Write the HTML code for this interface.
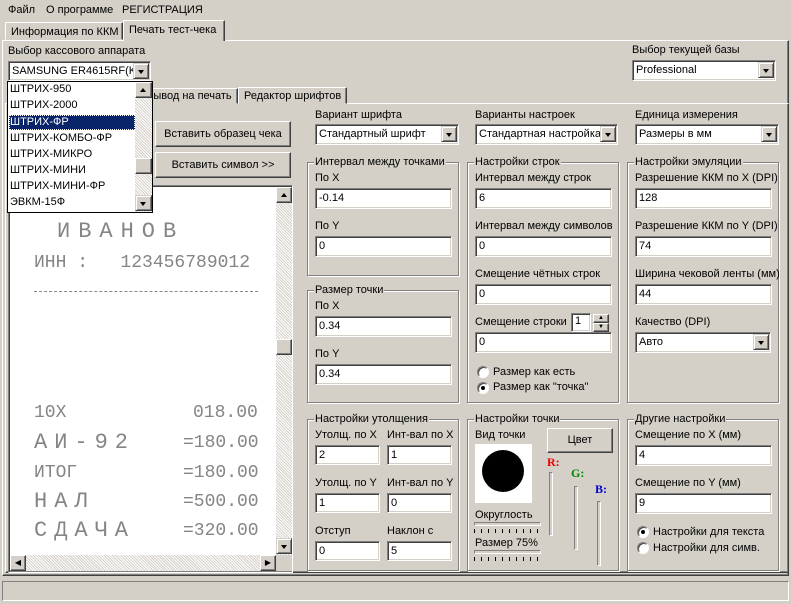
<!DOCTYPE html>
<html><head><meta charset="utf-8"><style>
*{box-sizing:border-box;margin:0;padding:0}
body{width:791px;height:604px;background:#d4d0c8;font:11px "Liberation Sans","DejaVu Sans",sans-serif;color:#000;position:relative;overflow:hidden}
div,span{position:absolute}
.l{white-space:nowrap;line-height:13px}
.f{background:#fff;border:1px solid;border-color:#808080 #fff #fff #808080;box-shadow:inset 1px 1px #404040,inset -1px -1px #d4d0c8;padding:3px 0 0 3px;white-space:nowrap;line-height:13px;overflow:hidden}
.b{border:1px solid;border-color:#fff #404040 #404040 #fff;box-shadow:inset -1px -1px #808080;background:#d4d0c8;text-align:center;white-space:nowrap}
.g{border:1px solid #808080;box-shadow:inset 1px 1px #fff,1px 1px #fff}
.gl{background:#d4d0c8;padding:0 1px;top:-7px;left:6px;white-space:nowrap;line-height:13px}
.dd{width:16px;height:16px;top:1px;right:1px;border:1px solid;border-color:#d4d0c8 #404040 #404040 #d4d0c8;box-shadow:inset 1px 1px #fff,inset -1px -1px #808080;background:#d4d0c8}
.dd:after,.up:after{content:"";position:absolute;left:4px;top:6px;border:3.5px solid transparent;border-top:4px solid #000;border-bottom:0}
.up:after{border-top:0;border-bottom:4px solid #000;top:5px}
.sb{background:#e8e6e2 repeating-linear-gradient(45deg,#fff 0 1px,#d4d0c8 1px 2px)}
.rc{font-family:"Liberation Mono","DejaVu Sans Mono",monospace;color:#858585;white-space:pre;font-size:18px;line-height:20px}
.r{width:12px;height:12px;border-radius:50%;background:#fff;border:1px solid;border-color:#808080 #fff #fff #808080;box-shadow:inset 1px 1px #404040}
.tab{border:1px solid;border-color:#fff #404040 transparent #fff;box-shadow:inset -1px 0 #808080;padding:2px 5px;white-space:nowrap;line-height:13px;background:#d4d0c8}
</style></head><body>
<span class="l" style="left:8px;top:4px">Файл</span>
<span class="l" style="left:46px;top:4px">О программе</span>
<span class="l" style="left:122px;top:4px">РЕГИСТРАЦИЯ</span>
<div style="left:2px;top:40px;width:787px;height:536px;border:1px solid;border-color:#fff #404040 #404040 #fff;box-shadow:inset -1px -1px #808080"></div>
<div class="tab" style="left:5px;top:22px;width:118px;height:18px;padding-top:3px">Информация по ККМ</div>
<div class="tab" style="left:123px;top:20px;width:102px;height:21px;padding-top:3px;border-bottom:0">Печать тест-чека</div>
<span class="l" style="left:8px;top:45px">Выбор кассового аппарата</span>
<div class="f" style="left:8px;top:61px;width:143px;height:20px">SAMSUNG ER4615RF(K<div class="dd"></div></div>
<span class="l" style="left:632px;top:44px">Выбор текущей базы</span>
<div class="f" style="left:632px;top:60px;width:144px;height:21px">Professional<div class="dd"></div></div>
<div style="left:5px;top:103px;width:784px;height:470px;border:1px solid;border-color:#fff #404040 #404040 #fff;box-shadow:inset -1px -1px #808080"></div>
<div class="tab" style="left:140px;top:88px;width:98px;height:16px;padding-top:1px">Вывод на печать</div>
<div class="tab" style="left:238px;top:87px;width:109px;height:17px;padding-top:2px">Редактор шрифтов</div>
<div class="b" style="left:155px;top:121px;width:136px;height:26px;line-height:24px">Вставить образец чека</div>
<div class="b" style="left:155px;top:152px;width:136px;height:26px;line-height:24px">Вставить символ &gt;&gt;</div>
<div style="left:8px;top:185px;width:285px;height:388px;border:1px solid;border-color:#808080 #fff #fff #808080;box-shadow:inset 1px 1px #404040"></div>
<div style="left:10px;top:187px;width:266px;height:368px;background:#fff"></div>
<div class="sb" style="left:276px;top:187px;width:16px;height:368px"></div>
<div class="b up" style="left:276px;top:187px;width:16px;height:16px;position:absolute"></div>
<div class="b" style="left:276px;top:339px;width:16px;height:16px"></div>
<div class="b dd" style="left:276px;top:538px;width:16px;height:16px;position:absolute"></div>
<div class="sb" style="left:10px;top:555px;width:266px;height:16px"></div>
<div class="b" style="left:10px;top:555px;width:16px;height:16px;font-size:8px;line-height:14px">◀</div>
<div class="b" style="left:260px;top:555px;width:16px;height:16px;font-size:8px;line-height:14px">▶</div>
<div class="rc" style="left:57px;top:222px;font-size:22px;letter-spacing:8px">ИВАНОВ</div>
<div class="rc" style="left:34px;top:253px">ИНН :   123456789012</div>
<div style="left:34px;top:291px;width:224px;border-top:1px dashed #888"></div>
<div class="rc" style="left:34px;top:403px">10X</div><div class="rc" style="left:193px;top:403px">018.00</div>
<div class="rc" style="left:34px;top:433px;font-size:22px;letter-spacing:7px">АИ-92</div><div class="rc" style="left:183px;top:433px">=180.00</div>
<div class="rc" style="left:34px;top:463px">ИТОГ</div><div class="rc" style="left:183px;top:463px">=180.00</div>
<div class="rc" style="left:34px;top:492px;font-size:22px;letter-spacing:7px">НАЛ</div><div class="rc" style="left:183px;top:492px">=500.00</div>
<div class="rc" style="left:34px;top:521px;font-size:22px;letter-spacing:7px">СДАЧА</div><div class="rc" style="left:183px;top:521px">=320.00</div>
<div style="left:7px;top:81px;width:146px;height:132px;background:#fff;border:1px solid #000"></div>
<span class="l" style="left:10px;top:83px">ШТРИХ-950</span>
<span class="l" style="left:10px;top:99px">ШТРИХ-2000</span>
<div style="left:9px;top:115px;width:126px;height:15px;background:#0a246a;border:1px dotted #fff"></div>
<span class="l" style="left:10px;top:116px;color:#fff">ШТРИХ-ФР</span>
<span class="l" style="left:10px;top:132px">ШТРИХ-КОМБО-ФР</span>
<span class="l" style="left:10px;top:148px">ШТРИХ-МИКРО</span>
<span class="l" style="left:10px;top:164px">ШТРИХ-МИНИ</span>
<span class="l" style="left:10px;top:180px">ШТРИХ-МИНИ-ФР</span>
<span class="l" style="left:10px;top:196px">ЭВКМ-15Ф</span>
<div class="sb" style="left:135px;top:82px;width:17px;height:130px"></div>
<div class="b up" style="left:135px;top:82px;width:17px;height:16px;position:absolute"></div>
<div class="b" style="left:135px;top:158px;width:17px;height:16px"></div>
<div class="b dd" style="left:135px;top:195px;width:17px;height:16px;position:absolute"></div>
<span class="l" style="left:315px;top:109px">Вариант шрифта</span>
<div class="f" style="left:315px;top:124px;width:144px;height:21px">Стандартный шрифт<div class="dd"></div></div>
<span class="l" style="left:475px;top:109px">Варианты настроек</span>
<div class="f" style="left:475px;top:124px;width:143px;height:21px">Стандартная настройка<div class="dd"></div></div>
<span class="l" style="left:635px;top:109px">Единица измерения</span>
<div class="f" style="left:635px;top:124px;width:144px;height:21px">Размеры в мм<div class="dd"></div></div>
<div class="g" style="left:307px;top:162px;width:152px;height:114px"><span class="gl">Интервал между точками</span></div>
<span class="l" style="left:315px;top:172px">По X</span>
<div class="f" style="left:315px;top:188px;width:137px;height:21px">-0.14</div>
<span class="l" style="left:315px;top:220px">По Y</span>
<div class="f" style="left:315px;top:236px;width:137px;height:21px">0</div>
<div class="g" style="left:307px;top:290px;width:152px;height:113px"><span class="gl">Размер точки</span></div>
<span class="l" style="left:315px;top:300px">По X</span>
<div class="f" style="left:315px;top:316px;width:137px;height:21px">0.34</div>
<span class="l" style="left:315px;top:348px">По Y</span>
<div class="f" style="left:315px;top:364px;width:137px;height:21px">0.34</div>
<div class="g" style="left:467px;top:162px;width:152px;height:241px"><span class="gl">Настройки строк</span></div>
<span class="l" style="left:475px;top:172px">Интервал между строк</span>
<div class="f" style="left:475px;top:188px;width:137px;height:21px">6</div>
<span class="l" style="left:475px;top:220px">Интервал между символов</span>
<div class="f" style="left:475px;top:236px;width:137px;height:21px">0</div>
<span class="l" style="left:475px;top:268px">Смещение чётных строк</span>
<div class="f" style="left:475px;top:284px;width:137px;height:21px">0</div>
<span class="l" style="left:475px;top:316px">Смещение строки</span>
<div class="f" style="left:571px;top:313px;width:20px;height:19px;padding-top:1px">1</div>
<div class="b" style="left:593px;top:314px;width:16px;height:9px;font-size:6px;line-height:7px">▲</div>
<div class="b" style="left:593px;top:323px;width:16px;height:9px;font-size:6px;line-height:7px">▼</div>
<div class="f" style="left:475px;top:332px;width:137px;height:21px">0</div>
<div class="r" style="left:477px;top:366px"></div><span class="l" style="left:493px;top:366px">Размер как есть</span>
<div class="r" style="left:477px;top:382px"><div style="left:3px;top:3px;width:4px;height:4px;background:#000;border-radius:50%"></div></div><span class="l" style="left:493px;top:381px">Размер как "точка"</span>
<div class="g" style="left:627px;top:162px;width:152px;height:241px"><span class="gl">Настройки эмуляции</span></div>
<span class="l" style="left:635px;top:172px">Разрешение ККМ по X (DPI)</span>
<div class="f" style="left:635px;top:188px;width:137px;height:21px">128</div>
<span class="l" style="left:635px;top:220px">Разрешение ККМ по Y (DPI)</span>
<div class="f" style="left:635px;top:236px;width:137px;height:21px">74</div>
<span class="l" style="left:635px;top:268px">Ширина чековой ленты (мм)</span>
<div class="f" style="left:635px;top:284px;width:137px;height:21px">44</div>
<span class="l" style="left:635px;top:316px">Качество (DPI)</span>
<div class="f" style="left:635px;top:332px;width:136px;height:21px">Авто<div class="dd"></div></div>
<div class="g" style="left:307px;top:419px;width:152px;height:152px"><span class="gl">Настройки утолщения</span></div>
<span class="l" style="left:315px;top:429px">Утолщ. по X</span><span class="l" style="left:387px;top:429px">Инт-вал по X</span>
<div class="f" style="left:315px;top:445px;width:65px;height:20px">2</div><div class="f" style="left:387px;top:445px;width:65px;height:20px">1</div>
<span class="l" style="left:315px;top:477px">Утолщ. по Y</span><span class="l" style="left:387px;top:477px">Инт-вал по Y</span>
<div class="f" style="left:315px;top:493px;width:65px;height:20px">1</div><div class="f" style="left:387px;top:493px;width:65px;height:20px">0</div>
<span class="l" style="left:315px;top:525px">Отступ</span><span class="l" style="left:387px;top:525px">Наклон с</span>
<div class="f" style="left:315px;top:541px;width:65px;height:20px">0</div><div class="f" style="left:387px;top:541px;width:65px;height:20px">5</div>
<div class="g" style="left:467px;top:419px;width:152px;height:152px"><span class="gl">Настройки точки</span></div>
<span class="l" style="left:475px;top:429px">Вид точки</span>
<div style="left:475px;top:444px;width:57px;height:59px;background:#fff"><div style="left:7px;top:6px;width:42px;height:42px;border-radius:50%;background:#000"></div></div>
<div class="b" style="left:547px;top:428px;width:66px;height:25px;line-height:23px">Цвет</div>
<span class="l" style="left:547px;top:455px;color:#e00;font:bold 12px 'Liberation Serif',serif">R:</span>
<span class="l" style="left:571px;top:466px;color:#080;font:bold 12px 'Liberation Serif',serif">G:</span>
<span class="l" style="left:595px;top:482px;color:#00c;font:bold 12px 'Liberation Serif',serif">B:</span>
<div style="left:549px;top:472px;width:4px;height:64px;border:1px solid;border-color:#808080 #fff #fff #808080"></div>
<div style="left:574px;top:486px;width:4px;height:64px;border:1px solid;border-color:#808080 #fff #fff #808080"></div>
<div style="left:597px;top:501px;width:4px;height:65px;border:1px solid;border-color:#808080 #fff #fff #808080"></div>
<span class="l" style="left:475px;top:509px">Округлость</span>
<div style="left:474px;top:522px;width:67px;height:4px;border:1px solid;border-color:#808080 #fff #fff #808080"></div>
<div style="left:474px;top:529px;width:66px;height:4px;background:repeating-linear-gradient(90deg,#000 0 1px,transparent 1px 7px)"></div>
<span class="l" style="left:475px;top:537px">Размер 75%</span>
<div style="left:474px;top:550px;width:67px;height:4px;border:1px solid;border-color:#808080 #fff #fff #808080"></div>
<div style="left:474px;top:557px;width:66px;height:4px;background:repeating-linear-gradient(90deg,#000 0 1px,transparent 1px 7px)"></div>
<div class="g" style="left:627px;top:419px;width:152px;height:152px"><span class="gl">Другие настройки</span></div>
<span class="l" style="left:635px;top:429px">Смещение по X (мм)</span>
<div class="f" style="left:635px;top:445px;width:137px;height:21px">4</div>
<span class="l" style="left:635px;top:477px">Смещение по Y (мм)</span>
<div class="f" style="left:635px;top:493px;width:137px;height:21px">9</div>
<div class="r" style="left:637px;top:526px"><div style="left:3px;top:3px;width:4px;height:4px;background:#000;border-radius:50%"></div></div><span class="l" style="left:653px;top:526px">Настройки для текста</span>
<div class="r" style="left:637px;top:542px"></div><span class="l" style="left:653px;top:542px">Настройки для симв.</span>
<div style="left:2px;top:581px;width:787px;height:20px;border:1px solid;border-color:#808080 #fff #fff #808080"></div>
</body></html>
